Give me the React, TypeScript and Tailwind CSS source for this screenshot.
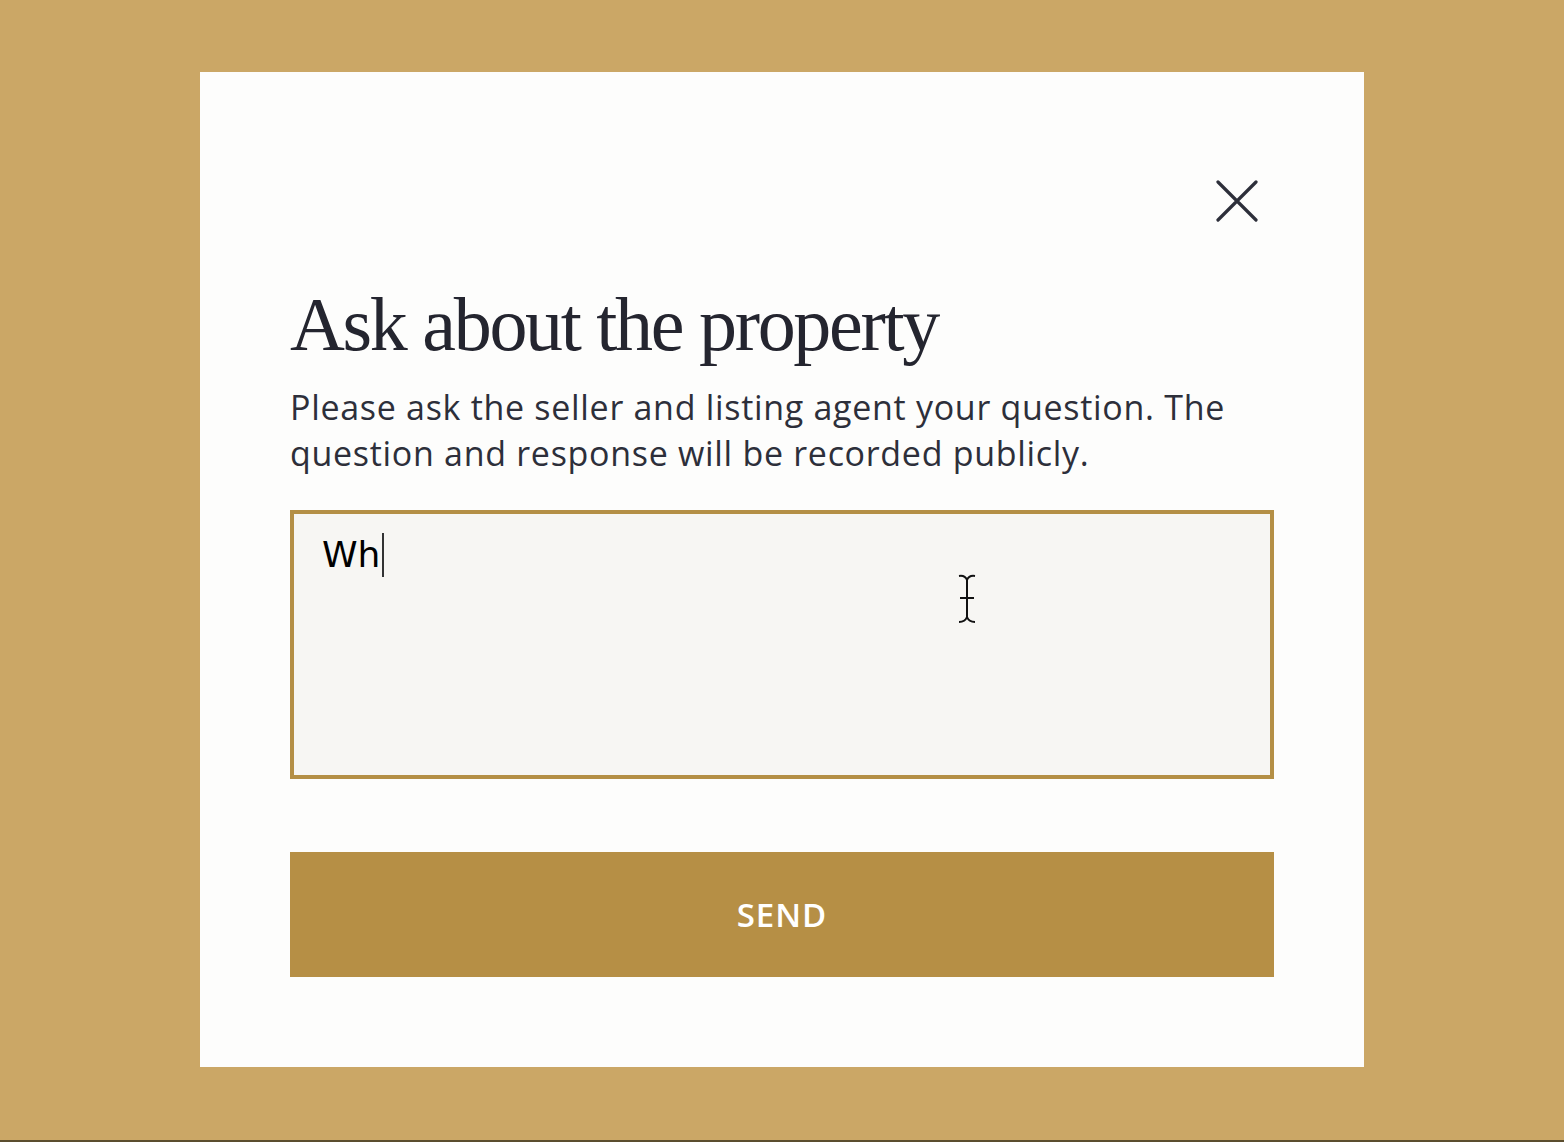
import React from "react";

export default function App() {
  return (
    <div className="w-full h-[1142px] bg-[#cba766] border-b-2 border-[#5b4d2e] pt-[72px] box-border">
      <div className="mx-auto w-[1164px] h-[995px] bg-[#fdfdfc] px-[90px] flex flex-col">
        <div className="flex justify-end pt-[108px] pr-[16px]">
          <svg width="42" height="42" viewBox="0 0 42 42" className="block">
            <path d="M2 2 L40 40 M40 2 L2 40" stroke="#2d2f3a" strokeWidth="3.2" strokeLinecap="round" />
          </svg>
        </div>
        <h1
          className="mt-[64px] text-[76px] leading-[76px] tracking-[-2.3px] text-[#24252f]"
          style={{ fontFamily: '"Liberation Serif", serif' }}
        >
          Ask about the property
        </h1>
        <p
          className="mt-[22px] text-[34px] leading-[46px] tracking-[0.7px] text-[#2d2f3a]"
          style={{ fontFamily: '"Open Sans", sans-serif' }}
        >
          Please ask the seller and listing agent your question. The question and response will be recorded publicly.
        </p>
        <div className="relative mt-[34px] h-[269px] border-4 border-[#b48f45] bg-[#f7f6f3]">
          <div
            className="absolute left-[28px] top-[19px] flex items-center text-[36px] leading-[44px] text-black"
            style={{ fontFamily: '"DejaVu Sans", sans-serif' }}
          >
            <span>Wh</span>
            <span className="ml-[2px] inline-block w-[2px] h-[44px] bg-[#333]" />
          </div>
          <svg className="absolute left-[663px] top-[60px]" width="24" height="50" viewBox="0 0 24 50">
            <path d="M2 2 Q8 1 10 6 Q12 1 18 2 M10 6 L10 44 M3 24 L17 24 M2 48 Q8 48 10 43 Q12 48 18 48" stroke="#111" strokeWidth="2" fill="none" />
          </svg>
        </div>
        <button
          className="mt-[73px] h-[125px] w-full bg-[#b68f45] text-white text-[33px] font-semibold tracking-[1px]"
          style={{ fontFamily: '"Open Sans", sans-serif' }}
        >
          SEND
        </button>
      </div>
    </div>
  );
}
